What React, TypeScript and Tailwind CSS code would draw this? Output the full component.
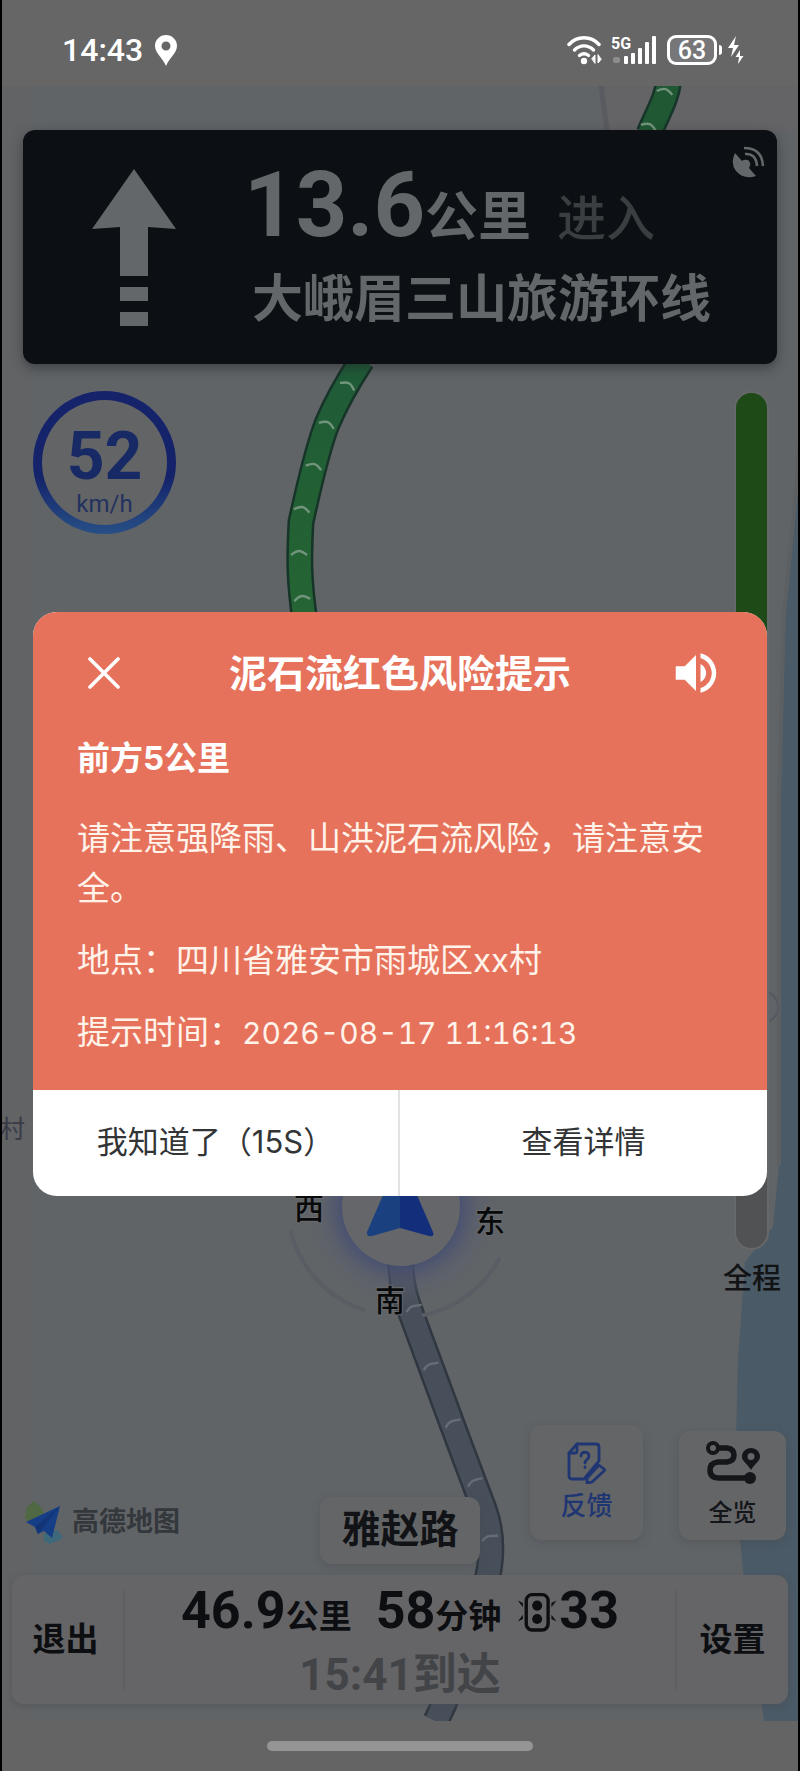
import type { ReactNode } from "react";

const CJK = "font-[Roboto,'Noto_Sans_CJK_SC',sans-serif]";

const CHEVRONS = [
  [348, 385, 28],
  [327, 424, 22],
  [314, 466, 16],
  [302, 509, 12],
  [299, 553, 0],
  [302, 598, -8],
  [665, 91, 14],
  [649, 126, 22],
];

const GREY_CHEVRONS = [
  [414, 1308, -8],
  [431, 1366, -10],
  [453, 1423, -12],
  [475, 1482, -14],
  [490, 1538, -2],
];

function Route({ d, fill, edge }: { d: string; fill: string; edge: string }) {
  return (
    <>
      <path d={d} fill="none" stroke={edge} strokeWidth="27" />
      <path d={d} fill="none" stroke={fill} strokeWidth="22" />
    </>
  );
}

function MapCanvas() {
  return (
    <svg
      className="absolute inset-0 h-full w-full"
      viewBox="0 0 800 1771"
      preserveAspectRatio="xMidYMin slice"
      aria-hidden="true"
    >
      <defs>
        <radialGradient id="glow">
          <stop offset="0.55" stopColor="#414b72" stopOpacity="0.9" />
          <stop offset="0.75" stopColor="#555a70" stopOpacity="0.5" />
          <stop offset="1" stopColor="#62646a" stopOpacity="0" />
        </radialGradient>
        <linearGradient id="routeGreen" x1="0" y1="364" x2="0" y2="612" gradientUnits="userSpaceOnUse">
          <stop offset="0" stopColor="#1f5b38" />
          <stop offset="0.5" stopColor="#226034" />
          <stop offset="1" stopColor="#256433" />
        </linearGradient>
      </defs>
      <rect width="800" height="1771" fill="#606467" />
      <rect x="2" y="86" width="30" height="1640" fill="#626365" />
      <path d="M601 86 L607 130 H800 V86Z" fill="#646467" />
      <path d="M601 86 L607 130" stroke="#595b60" strokeWidth="5" />
      <path d="M800 440 L796 492 L784 615 L779 799 V1166 L773 1227 L745 1262 L738 1360 L735 1480 L743 1571 L764 1721 H800Z" fill="#4a5a66" />
      <path d="M800 440 L796 492 L784 615 L779 799 V1166" fill="none" stroke="#5c6063" strokeWidth="4" />
      <circle cx="762" cy="1007" r="16" fill="#60646a" stroke="#565960" strokeWidth="2" />

      <Route d="M669 80 C666 100 660 108 649 134" fill="#215834" edge="#17352a" />
      <Route
        d="M362 360 C345 386 335 405 327 424 C317 450 308 490 301 522 C299 560 299 580 305 622"
        fill="url(#routeGreen)"
        edge="#163428"
      />
      {CHEVRONS.map(([x, y, r]) => (
        <path
          key={`${x}-${y}`}
          d="M-8 2 Q-3 -2 0 -2 Q3 -2 8 2"
          transform={`translate(${x} ${y}) rotate(${r})`}
          fill="none"
          stroke="#72947c"
          strokeWidth="2.4"
        />
      ))}

      <Route
        d="M400 1250 C401 1280 403 1292 411 1313 L458 1440 L484 1509 Q496 1542 487 1580 L444 1704 L436 1721"
        fill="#474f5a"
        edge="#303740"
      />
      {GREY_CHEVRONS.map(([x, y, r]) => (
        <path
          key={`${x}-${y}`}
          d="M-8 3 Q-4 -2 0 -2 L8 -2"
          transform={`translate(${x} ${y}) rotate(${r})`}
          fill="none"
          stroke="#676d75"
          strokeWidth="2.4"
        />
      ))}
      <rect y="1721" width="800" height="50" fill="#646464" />

      <path d="M291 1232 A110 110 0 0 0 364 1310" fill="none" stroke="#5b5d64" strokeWidth="4" strokeLinecap="round" />
      <path d="M424 1315 A110 110 0 0 0 499 1259" fill="none" stroke="#5b5d64" strokeWidth="4" strokeLinecap="round" />
      <circle cx="401" cy="1207" r="100" fill="url(#glow)" />
      <circle cx="401" cy="1207" r="59" fill="#65666a" />
      <path d="M400 1156 L367 1232 Q366 1237 372 1236 L400 1228Z" fill="#1a4080" />
      <path d="M400 1156 L433 1232 Q435 1237 429 1236 L400 1228Z" fill="#132f7c" />

      <g
        fontFamily="'Noto Sans CJK SC', sans-serif"
        fontSize="30"
        fontWeight="500"
        fill="#08090b"
        stroke="#6a6c6e"
        strokeWidth="2"
        paintOrder="stroke"
      >
        <text x="294" y="1219">西</text>
        <text x="475" y="1232">东</text>
        <text x="375" y="1311">南</text>
      </g>
      <text x="0" y="1138" fontFamily="'Noto Sans CJK SC', sans-serif" fontSize="25" fill="#383b47">村</text>
    </svg>
  );
}

function StatusBar() {
  return (
    <header className="relative flex h-[86px] items-center justify-between bg-[#666666] pt-[14px] pr-14 pl-[62px] text-white">
      <div className="flex items-center gap-3">
        <time className="text-[32px] leading-none font-medium">14:43</time>
        <svg width="22" height="31" viewBox="0 0 22 31" fill="currentColor" aria-label="定位">
          <path
            fillRule="evenodd"
            d="M11 0C5 0 0 4.800 0 10.800C0 18 7 22 11 31C15 22 22 18 22 10.800C22 4.800 17 0 11 0ZM11 6.500A4.500 4.500 0 1 1 11 15.500A4.500 4.500 0 0 1 11 6.500Z"
          />
        </svg>
      </div>
      <div className="flex items-center">
        <svg width="36" height="30" viewBox="0 0 36 30" fill="none" stroke="currentColor" strokeWidth="3.4" strokeLinecap="round" aria-label="Wi-Fi">
          <path d="M2 9.500C10 0.500 24 0.500 32 9.500" />
          <path d="M7.500 15C13 9.500 21 9.500 26.500 15" />
          <path d="M12.500 20.500Q17 17 21.500 20.500" />
          <circle cx="17" cy="26" r="3.200" fill="currentColor" stroke="none" />
          <path d="M28 28V20L25 23.500Z M31 20V28L34 24.500Z" strokeWidth="1" strokeLinejoin="round" fill="currentColor" />
        </svg>
        <svg className="ml-2" width="46" height="30" viewBox="0 0 46 30" fill="currentColor" aria-label="信号">
          <text x="0" y="14" fontSize="16" fontWeight="700" fontFamily="Roboto, sans-serif">5G</text>
          <rect x="2" y="22" width="7" height="6" rx="2" opacity="0.25" />
          <rect x="13" y="21" width="4" height="8" rx="1" />
          <rect x="20" y="18" width="4" height="11" rx="1" />
          <rect x="27" y="13" width="4" height="16" rx="1" />
          <rect x="34" y="7" width="4" height="22" rx="1" />
          <rect x="41" y="1" width="4" height="28" rx="1" />
        </svg>
        <span className="ml-2.5 flex h-[30px] w-[50px] items-center justify-center rounded-[9px] border-[3px] border-white bg-[#77777a] text-[25px] leading-none font-medium">
          63
        </span>
        <span className="ml-[2px] h-2.5 w-[3px] rounded-r bg-white" />
        <svg className="ml-1.5" width="16" height="30" viewBox="0 0 16 30" fill="currentColor" aria-label="充电中">
          <path d="M8 1L0 13H5L3 22L11 10H6Z" />
          <path d="M12 15L7.500 22H11L10 29L15.500 21H12Z" />
        </svg>
      </div>
    </header>
  );
}

function TurnCard() {
  return (
    <section className="relative mx-[23px] mt-11 flex h-[234px] items-center rounded-xl bg-[#0c0f13] pl-[69px] text-[#64676a] shadow-[0_4px_12px_rgba(30,32,36,0.5)]">
      <svg className="shrink-0" width="84" height="157" viewBox="0 0 84 157" fill="currentColor" aria-label="直行">
        <path d="M42 0L84 60L56 58V107H28V58L0 60Z" />
        <rect x="28" y="118" width="28" height="14" />
        <rect x="28" y="143" width="28" height="14" />
      </svg>
      <div className="ml-[68px] pt-1 whitespace-nowrap">
        <p className="flex items-baseline leading-[88px] font-bold">
          <span className="text-[90px]">13.6</span>
          <span className="text-[53px]">公里</span>
          <span className="ml-[26px] text-[49px] font-medium text-[#3b3e41]">进入</span>
        </p>
        <p className="pl-2 text-[51px] leading-[72px] font-bold">大峨眉三山旅游环线</p>
      </div>
      <svg className="absolute top-4 right-3" width="34" height="33" viewBox="0 0 34 33" fill="none" stroke="currentColor" strokeWidth="2.600" aria-label="卫星信号">
        <path d="M4 7Q-1 17 5 25Q13 34 25 30L18 22Q21 17 17 14Q13 13 11 15Z" fill="currentColor" stroke="none" />
        <path d="M14 8Q25 7 26 20" />
        <path d="M13 2Q31 2 32 20" />
      </svg>
    </section>
  );
}

function Speedometer() {
  return (
    <div className="h-[143px] w-[143px] rounded-full bg-gradient-to-b from-[#15236a] from-60% to-[#284f86] p-[9px]">
      <div className="flex h-full w-full flex-col items-center justify-center rounded-full bg-[#636466] pt-3 text-[#182a66]">
        <span className="text-[66px] leading-[70px] font-bold">52</span>
        <span className="text-2xl leading-6 text-[#22315f]">km/h</span>
      </div>
    </div>
  );
}

function TripProgress() {
  return (
    <div className="flex flex-col items-center">
      <div className="flex w-[35px] flex-1 flex-col rounded-full border-2 border-[#66686a] bg-[#515253]">
        <div className="h-1/2 rounded-t-full bg-[#1d4a17]" />
      </div>
      <span className="mt-1 text-[29px] leading-[50px] font-medium text-[#121315]">全程</span>
    </div>
  );
}

function Logo() {
  return (
    <div className="mb-5 flex items-center gap-2 pl-6 text-[#34373c]">
      <svg width="40" height="44" viewBox="0 0 40 44" aria-hidden="true">
        <path d="M2 8L10 1L18 8L20 14L4 22L1 18Z" fill="#4c6a3c" opacity="0.8" />
        <path d="M20 34L34 30L39 38L26 44L20 41Z" fill="#2f6b84" opacity="0.7" />
        <path d="M36 6L2 22L11 27L14 34L20 31L28 38Z" fill="#153e86" />
        <path d="M36 6L11 27L14 34Z" fill="#133578" />
      </svg>
      <span className="text-[27px] leading-10 font-bold">高德地图</span>
    </div>
  );
}

function MapButton({ children, className }: { children: ReactNode; className: string }) {
  return (
    <button type="button" className={`flex flex-col items-center justify-center rounded-xl bg-[#646567] shadow-[0_3px_8px_rgba(70,72,78,0.4)] ${className}`}>
      {children}
    </button>
  );
}

function MapTools() {
  return (
    <div className="mb-6 flex items-end gap-9 justify-self-end pr-[14px]">
      <MapButton className="h-[115px] w-[113px] text-[#1f3672]">
        <svg width="40" height="42" viewBox="0 0 40 42" fill="none" stroke="currentColor" strokeWidth="2.800" strokeLinejoin="round" strokeLinecap="round" aria-hidden="true">
          <path d="M17 37H5Q2 37 2 34V11L10 2H29Q32 2 32 5V19L17 37" />
          <path d="M2 11H8Q10 11 10 9V2" />
          <path d="M14 14C14 9 22 9 22 14C22 18 18 17 18 21M18 25V25.500" />
          <path d="M33 24L37 27Q38 28 37 29L25 40L20 41L20 36L31 24Q32 23 33 24Z" fill="#62646c" />
        </svg>
        <span className="mt-1 text-[26px] leading-9 font-medium">反馈</span>
      </MapButton>
      <MapButton className="h-[109px] w-[107px] text-[#14161a]">
        <svg width="54" height="46" viewBox="0 0 54 46" fill="none" stroke="currentColor" strokeWidth="5.500" aria-hidden="true">
          <circle cx="7" cy="7" r="5" strokeWidth="4" />
          <path d="M12 7H21Q28 8 28 14Q28 20 21 21H12Q4 22 4 29Q4 37 13 37H42" />
          <circle cx="44" cy="37" r="6" fill="currentColor" stroke="none" />
          <path
            d="M45 7C40 7 36 11 36 15.500C36 21 42 23 45 29C48 23 54 21 54 15.500C54 11 50 7 45 7ZM45 12A3.500 3.500 0 1 1 45 19A3.500 3.500 0 0 1 45 12Z"
            fill="currentColor"
            fillRule="evenodd"
            stroke="none"
          />
        </svg>
        <span className="mt-2 text-2xl leading-9 font-medium">全览</span>
      </MapButton>
    </div>
  );
}

function TrafficLight() {
  return (
    <svg className="self-center" width="42" height="42" viewBox="0 0 42 50" fill="currentColor" aria-label="红绿灯">
      <rect x="7" y="2" width="26" height="42" rx="7" fill="none" stroke="currentColor" strokeWidth="4" />
      <circle cx="20" cy="15" r="6" />
      <circle cx="20" cy="31" r="6" />
      <path d="M-3 9L3 12V17ZM-3 34L3 31V26ZM43 9L37 12V17ZM43 34L37 31V26Z" />
    </svg>
  );
}

function TripBar() {
  return (
    <section className="relative mx-3 mt-[11px] flex h-[129px] items-center rounded-xl bg-[#656567] text-[#0d0e11] shadow-[0_2px_6px_rgba(74,76,84,0.5)]">
      <button type="button" className="h-[100px] w-[113px] border-r-2 border-[#5e5f61] pr-1 text-[33px] font-bold">
        退出
      </button>
      <div className="flex-1 pt-1 text-center whitespace-nowrap">
        <p className="flex items-baseline justify-center text-[52px] leading-[60px] font-bold">
          46.9<span className="text-[33px]">公里</span>
          <span className="ml-6">58</span>
          <span className="mr-4 text-[33px]">分钟</span>
          <TrafficLight />
          33
        </p>
        <p className="text-[44px] leading-14 font-bold text-[#434447]">15:41到达</p>
      </div>
      <button type="button" className="h-[100px] w-[113px] border-l-2 border-[#5e5f61] text-[33px] font-bold">
        设置
      </button>
    </section>
  );
}

function AlertDialog() {
  return (
    <div className="absolute inset-0 flex items-center justify-center px-[33px] pt-9">
      <div
        role="dialog"
        aria-labelledby="alert-title"
        className="w-full overflow-hidden rounded-3xl bg-white font-[Inter,'Noto_Sans_CJK_SC',sans-serif]"
      >
        <div className="bg-[#e6725c] px-11 pt-[33px] pb-8 text-[33px] leading-[50px] text-[#fff3ea]">
          <div className="flex h-14 items-center justify-between text-white">
            <button type="button" aria-label="关闭" className="flex w-[54px] justify-center">
              <svg width="32" height="32" viewBox="0 0 32 32" stroke="currentColor" strokeWidth="3.600" strokeLinecap="round">
                <path d="M2 2L30 30M30 2L2 30" />
              </svg>
            </button>
            <h1 id="alert-title" className="text-[38px] font-bold">泥石流红色风险提示</h1>
            <button type="button" aria-label="播报">
              <svg width="54" height="54" viewBox="0 0 24 24" fill="currentColor">
                <path d="M3 9v6h4l5 5V4L7 9H3zm13.500 3c0-1.770-1.020-3.290-2.500-4.030v8.050c1.480-.73 2.500-2.250 2.500-4.020zM14 3.230v2.060c2.890.86 5 3.540 5 6.710s-2.110 5.850-5 6.710v2.060c4.010-.91 7-4.490 7-8.770s-2.990-7.860-7-8.770z" />
              </svg>
            </button>
          </div>
          <h2 className="mt-8 font-bold text-white">前方5公里</h2>
          <div className="mt-[30px] flex flex-col gap-[22px]">
            <p>请注意强降雨、山洪泥石流风险，请注意安全。</p>
            <p>地点：四川省雅安市雨城区xx村</p>
            <p className="flex items-baseline">
              提示时间：
              <time className="text-3xl leading-[50px] tabular-nums">2026-08-17 11:16:13</time>
            </p>
          </div>
        </div>
        <div className="grid h-[106px] grid-cols-2 divide-x-2 divide-[#e2e2e2] text-[31px] text-[#333436]">
          <button type="button">我知道了（15S）</button>
          <button type="button">查看详情</button>
        </div>
      </div>
    </div>
  );
}

export default function App() {
  return (
    <main className={`relative flex min-h-screen flex-col overflow-hidden bg-[#606467] ${CJK}`}>
      <MapCanvas />
      <StatusBar />
      <TurnCard />
      <div className="relative mt-[27px] flex flex-1 justify-between pr-[19px] pl-[33px]">
        <Speedometer />
        <TripProgress />
      </div>
      <div className="relative mt-[121px] grid grid-cols-[1fr_auto_1fr] items-end">
        <Logo />
        <p className="w-40 rounded-xl bg-[#646567] text-center text-[39px] leading-[67px] font-bold text-[#111316] shadow-[0_3px_8px_rgba(70,72,78,0.4)]">
          雅赵路
        </p>
        <MapTools />
      </div>
      <TripBar />
      <div className="relative mx-auto mt-[37px] mb-5 h-[10px] w-1/3 rounded-full bg-[#959595]" />
      <AlertDialog />
      <div className="pointer-events-none absolute inset-0 border-x-2 border-black" />
    </main>
  );
}
